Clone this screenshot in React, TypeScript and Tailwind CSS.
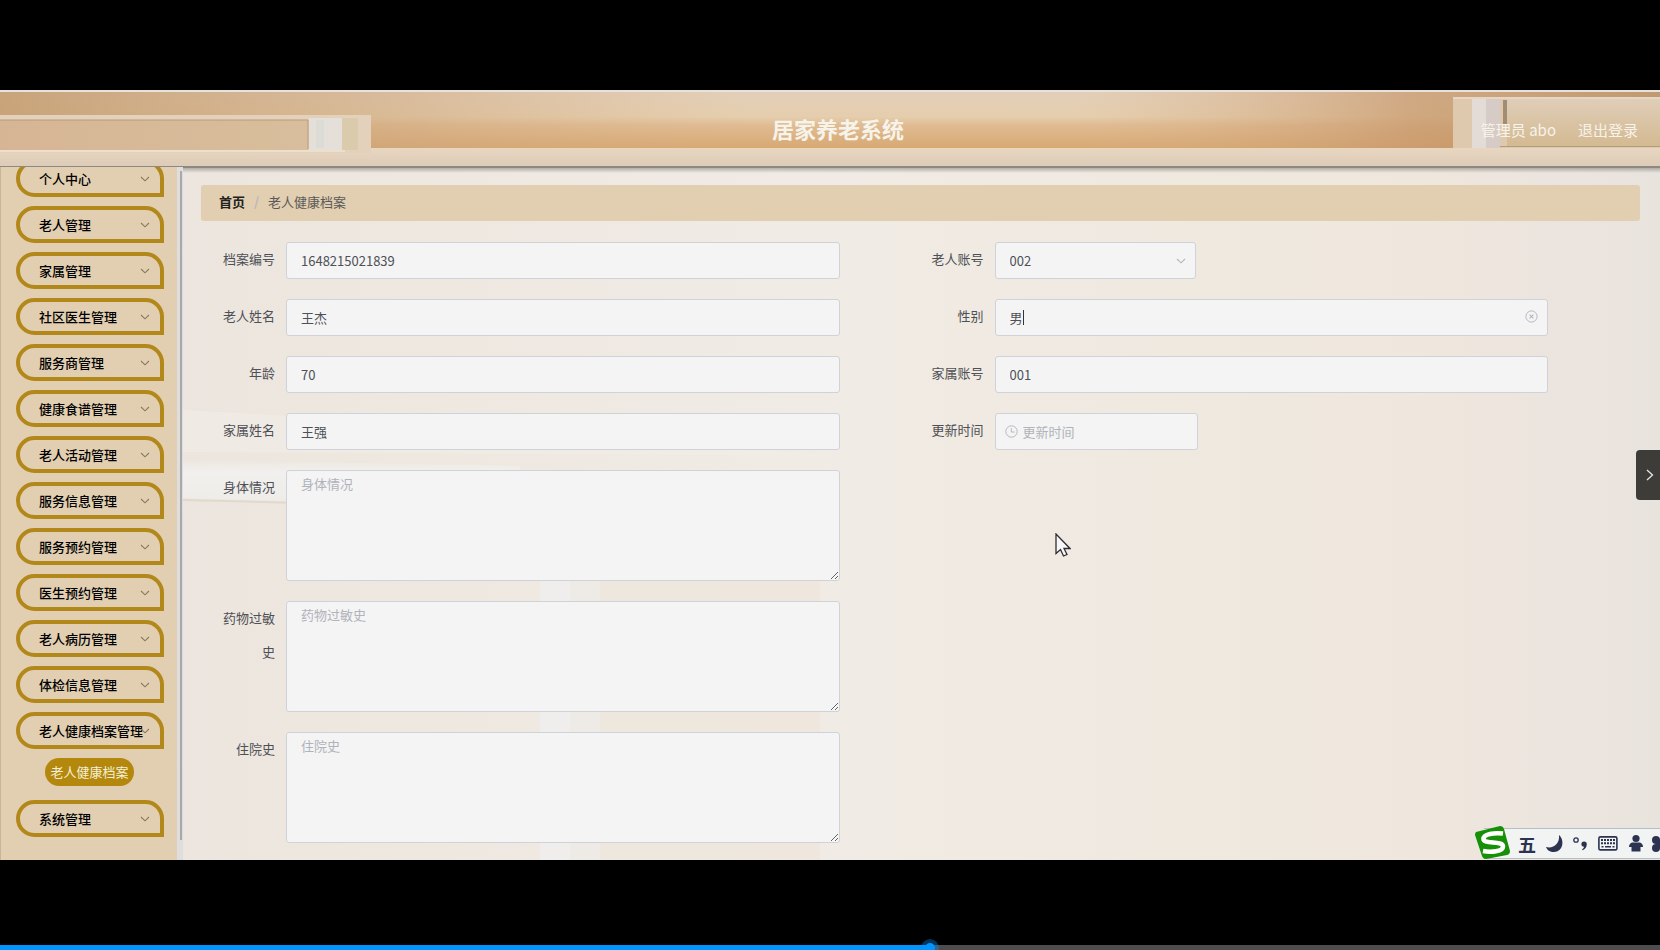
import React, { useState } from 'react';

const MENU = [
  '个人中心',
  '老人管理',
  '家属管理',
  '社区医生管理',
  '服务商管理',
  '健康食谱管理',
  '老人活动管理',
  '服务信息管理',
  '服务预约管理',
  '医生预约管理',
  '老人病历管理',
  '体检信息管理',
  '老人健康档案管理',
];

const FIELD =
  'w-full h-[37px] px-3.5 rounded-[3px] border border-[#cfd2d8] bg-[#f4f4f4] text-[#4e5055] placeholder:text-[#b0b3ba] outline-none';

/**
 * Interior backdrop: shelf in the header, pale wall behind the form
 */
const Backdrop: React.FC = () => (
  <svg
    className="absolute inset-0 w-full h-full"
    viewBox="0 0 1660 770"
    preserveAspectRatio="none"
    aria-hidden="true"
  >
    <defs>
      <linearGradient id="wall" x1="0" x2="1" y1="0" y2="0">
        <stop offset="0" stopColor="#ebe4de" />
        <stop offset="0.2" stopColor="#ede7e0" />
        <stop offset="0.5" stopColor="#f0ebe4" />
        <stop offset="0.86" stopColor="#efe7dd" />
        <stop offset="0.95" stopColor="#ebe4df" />
        <stop offset="1" stopColor="#e9e3dd" />
      </linearGradient>
      <linearGradient id="wood" x1="0" x2="0" y1="0" y2="1">
        <stop offset="0" stopColor="#e2cfba" />
        <stop offset="0.45" stopColor="#e5ceae" />
        <stop offset="0.6" stopColor="#e0bb92" />
        <stop offset="1" stopColor="#d7a871" />
      </linearGradient>
      <linearGradient id="woodSide" x1="0" x2="1" y1="0" y2="0">
        <stop offset="0" stopColor="#bf9566" stopOpacity="0.75" />
        <stop offset="0.25" stopColor="#cda67d" stopOpacity="0.45" />
        <stop offset="0.45" stopColor="#d8b088" stopOpacity="0" />
        <stop offset="0.65" stopColor="#d8b088" stopOpacity="0" />
        <stop offset="0.85" stopColor="#c7986c" stopOpacity="0.7" />
        <stop offset="1" stopColor="#b98c5e" stopOpacity="0.8" />
      </linearGradient>
      <linearGradient id="ledge" x1="0" x2="0" y1="0" y2="1">
        <stop offset="0" stopColor="#e8d6c1" />
        <stop offset="1" stopColor="#dccbb6" />
      </linearGradient>
      <linearGradient id="shelf" x1="0" x2="1" y1="0" y2="0">
        <stop offset="0" stopColor="#d6b594" />
        <stop offset="1" stopColor="#d8be9c" />
      </linearGradient>
      <linearGradient id="cabinet" x1="0" x2="0" y1="0" y2="1">
        <stop offset="0" stopColor="#dfceb8" />
        <stop offset="1" stopColor="#d4b991" />
      </linearGradient>
      <linearGradient id="gleam" x1="0" x2="0" y1="0" y2="1">
        <stop offset="0" stopColor="#f3f2f0" stopOpacity="0" />
        <stop offset="0.3" stopColor="#f1f0ee" />
        <stop offset="1" stopColor="#efece8" />
      </linearGradient>
      <linearGradient id="fadeDown" x1="0" x2="0" y1="0" y2="1">
        <stop offset="0" stopColor="#77736c" stopOpacity="0.5" />
        <stop offset="1" stopColor="#77736c" stopOpacity="0" />
      </linearGradient>
    </defs>

    <rect width="1660" height="770" fill="url(#wall)" />
    <path d="M183 320 L540 340 L840 366 L183 362z" fill="#f1ece7" opacity="0.6" />
    <path d="M183 370 L520 376 L520 386 L286 411 L183 408z" fill="url(#gleam)" />
    <path d="M183 409 L300 412 V414 L183 411z" fill="#e0d9cc" />
    <rect x="540" y="480" width="30" height="290" fill="#efeeed" />
    <rect x="570" y="480" width="30" height="290" fill="#eeebe7" />
    <rect x="600" y="480" width="220" height="290" fill="#eee5dc" opacity="0.7" />

    <rect width="1660" height="59" fill="url(#wood)" />
    <rect width="1660" height="59" fill="url(#woodSide)" />
    <rect width="1660" height="2" fill="#e8e2dd" />
    <rect y="58" width="1660" height="19" fill="url(#ledge)" />

    <rect y="25" width="371" height="38" fill="#e3d1bb" />
    <rect y="30" width="308" height="30" fill="url(#shelf)" />
    <path d="M0 30 H308 V59" fill="none" stroke="#b89a7c" strokeWidth="1" />
    <rect x="309" y="28" width="33" height="32" fill="#e5dfd9" />
    <rect x="316" y="30" width="8" height="28" fill="#dcdcd6" />
    <rect x="342" y="28" width="16" height="32" fill="#d9cbab" />
    <rect y="60" width="345" height="2" fill="#ecdfce" />

    <rect x="1453" y="8" width="207" height="50" fill="#dfc9ae" />
    <rect x="1472" y="9" width="14" height="49" fill="#e3dcd6" />
    <rect x="1486" y="9" width="14" height="49" fill="#d7cbc7" />
    <rect x="1507" y="9" width="153" height="48" fill="url(#cabinet)" />
    <rect x="1503" y="10" width="4" height="24" fill="#a08d73" />
    <rect x="1500" y="56" width="160" height="1" fill="#b39c7c" />
    <rect x="1453" y="7" width="207" height="2" fill="#e6d6c3" />

    <rect y="76" width="1660" height="2" fill="#8d8880" />
    <rect y="78" width="1660" height="5" fill="url(#fadeDown)" />
  </svg>
);

const Chevron: React.FC<{ className?: string }> = ({ className = '' }) => (
  <svg
    className={`w-2.5 h-2.5 shrink-0 ${className}`}
    viewBox="0 0 10 10"
    fill="none"
    stroke="currentColor"
    strokeWidth="1.1"
    aria-hidden="true"
  >
    <path d="M1 3 L5 6.8 L9 3" />
  </svg>
);

const MenuItem: React.FC<{ label: string }> = ({ label }) => (
  <li>
    <button
      type="button"
      className="flex items-center w-full h-[37px] pl-[19px] pr-2.5 rounded-[19px] rounded-br-none border-4 border-[#b3881a] text-left text-black font-medium"
    >
      <span className="flex-1 min-w-0 whitespace-nowrap">{label}</span>
      <Chevron className="text-[#8b7a60]" />
    </button>
  </li>
);

const Sidebar: React.FC = () => (
  <nav className="flex flex-col justify-end w-[177px] shrink-0 overflow-hidden pl-[15px] pr-[13px] pb-[23px] bg-[#e2ceb0] border-l border-[#c9b699]">
    <ul className="flex flex-col gap-[9px]">
      {MENU.map((label) => (
        <MenuItem key={label} label={label} />
      ))}
      <li className="pl-[29px] pb-[5px]">
        <a
          href="#record"
          className="flex items-center justify-center w-[89px] h-7 rounded-full bg-[#b3880c] text-[#f3efd6] whitespace-nowrap"
        >
          老人健康档案
        </a>
      </li>
      <MenuItem label="系统管理" />
    </ul>
  </nav>
);

/**
 * One label + control pair of the form grid
 */
const FormRow: React.FC<{
  id: string;
  label: string;
  className?: string;
  children: React.ReactNode;
}> = ({ id, label, className = '', children }) => (
  <div className={`flex pr-20 ${className}`}>
    <label
      htmlFor={id}
      className="w-[75px] shrink-0 pr-[11px] text-right leading-[34px] text-[#4e5055]"
    >
      {label}
    </label>
    <div className="relative flex-1">{children}</div>
  </div>
);

const AreaRow: React.FC<{ id: string; label: string }> = ({ id, label }) => (
  <FormRow id={id} label={label} className="col-start-1">
    <textarea
      id={id}
      placeholder={label}
      className="block w-full h-[111px] px-3.5 py-[3px] leading-5 resize rounded-[3px] border border-[#cfd2d8] bg-[#f4f4f4] placeholder:text-[#b0b3ba] outline-none"
    />
  </FormRow>
);

const RecordForm: React.FC = () => (
  <form className="grid grid-cols-2 gap-y-5 pl-2.5 pr-3 mt-[21px]">
    <FormRow id="code" label="档案编号">
      <input id="code" className={FIELD} defaultValue="1648215021839" />
    </FormRow>
    <FormRow id="account" label="老人账号">
      <div className="relative w-[201px]">
        <select id="account" className={`${FIELD} appearance-none`} defaultValue="002">
          <option>002</option>
        </select>
        <Chevron className="absolute right-2.5 top-3.5 text-[#b3b6bd]" />
      </div>
    </FormRow>
    <FormRow id="name" label="老人姓名">
      <input id="name" className={FIELD} defaultValue="王杰" />
    </FormRow>
    <FormRow id="gender" label="性别">
      <input id="gender" className={FIELD} defaultValue="男" />
      <span className="absolute left-7 top-[11px] w-px h-[15px] bg-[#333]" />
      <button type="button" aria-label="清空" className="absolute right-2.5 top-[11px] text-[#b5b8c0]">
        <svg className="w-[13px] h-[13px]" viewBox="0 0 13 13" fill="none" stroke="currentColor">
          <circle cx="6.5" cy="6.5" r="5.6" />
          <path d="M4.6 4.6 L8.4 8.4 M8.4 4.6 L4.6 8.4" strokeWidth="1.2" />
        </svg>
      </button>
    </FormRow>
    <FormRow id="age" label="年龄">
      <input id="age" className={FIELD} defaultValue="70" />
    </FormRow>
    <FormRow id="family" label="家属账号">
      <input id="family" className={FIELD} defaultValue="001" />
    </FormRow>
    <FormRow id="familyName" label="家属姓名">
      <input id="familyName" className={FIELD} defaultValue="王强" />
    </FormRow>
    <FormRow id="updated" label="更新时间">
      <div className="relative w-[203px]">
        <input id="updated" className={`${FIELD} pl-[27px]`} placeholder="更新时间" />
        <svg
          className="absolute left-2.5 top-3 w-[13px] h-[13px] text-[#b5b8c0]"
          viewBox="0 0 13 13"
          fill="none"
          stroke="currentColor"
          aria-hidden="true"
        >
          <circle cx="6.5" cy="6.5" r="5.7" />
          <path d="M6.3 3.2 V7 H9.6" />
        </svg>
      </div>
    </FormRow>
    <AreaRow id="body" label="身体情况" />
    <AreaRow id="allergy" label="药物过敏史" />
    <AreaRow id="hospital" label="住院史" />
  </form>
);

/**
 * Input method toolbar docked in the corner
 */
const ImeBar: React.FC = () => (
  <div className="absolute right-0 bottom-px flex items-center justify-end w-[176px] h-[31px] border-y border-[#b4c0c4] bg-[#f2f4f3] text-[#2b3350]">
    <svg className="absolute -left-[9px] -top-1 w-9 h-9" viewBox="0 0 36 36" aria-hidden="true">
      <path d="M1 7 L25 1 Q28 1 29 4 L35 26 Q35 29 32 30 L11 34 Q8 34 7 31 L0 10 Q0 8 1 7z" fill="#169006" />
      <path
        d="M28 8.5 C19 7.5 8.5 9 8.5 14 C8.5 19.5 28 15.5 28 21.5 C28 26.5 16 27.5 8 26"
        fill="none"
        stroke="#fff"
        strokeWidth="4.6"
      />
    </svg>
    <span className="w-[27px] shrink-0 text-[18px] leading-[28px] font-bold">五</span>
    <svg className="w-[115px] h-5 shrink-0" viewBox="0 0 115 20" fill="currentColor" aria-hidden="true">
      <path d="M14 1 C20 6 18 18 9 18 C5 18 2 16 1 13 C8 15 15 10 14 1z" />
      <circle cx="31" cy="6" r="2.2" fill="none" stroke="currentColor" strokeWidth="1.3" />
      <path d="M39 7.5 a2.8 2.8 0 0 1 2.8 2.8 c0 3-1.8 5-4 6 l-.8-1 c1.2-.8 2-1.6 2-2.6 a2.6 2.6 0 0 1 0-5.2z" />
      <rect x="53.9" y="2.9" width="18" height="13" rx="1.5" fill="none" stroke="currentColor" strokeWidth="1.6" />
      <path
        d="M56 6 H70 M56 9.3 H70"
        stroke="currentColor"
        strokeWidth="2"
        strokeDasharray="2 1"
      />
      <path d="M56.5 12.8 H58.5 M60 12.8 H66 M67.5 12.8 H69.5" stroke="currentColor" strokeWidth="1.6" />
      <circle cx="91" cy="4.5" r="3.6" />
      <path d="M87 8.5 H95 Q98 9.5 98 13 H95.5 V17.5 H86.5 V13 H84 Q84 9.5 87 8.5z" />
      <circle cx="111" cy="6" r="4" />
      <circle cx="111" cy="14" r="4" />
      <rect x="111" y="6" width="6" height="8" />
    </svg>
  </div>
);

const VideoProgress: React.FC = () => {
  const [value, setValue] = useState(56);
  return (
    <div className="relative h-[5px] bg-[#4d4d4d]">
      <div className="h-full bg-[#0094ff]" style={{ width: `${value}%` }} />
      <svg
        className="absolute bottom-[-7px] w-[18px] h-[18px] -translate-x-1/2"
        style={{ left: `${value}%` }}
        viewBox="0 0 18 18"
        aria-hidden="true"
      >
        <circle cx="9" cy="9" r="9" fill="#0094ff" opacity="0.35" />
        <circle cx="9" cy="9" r="5" fill="#0094ff" />
      </svg>
      <input
        type="range"
        aria-label="播放进度"
        className="absolute inset-0 w-full h-full opacity-0"
        value={value}
        onChange={(e) => setValue(Number(e.target.value))}
      />
    </div>
  );
};

export default function App() {
  return (
    <div className="relative flex flex-col h-screen overflow-hidden bg-black pt-[90px] font-['Noto_Sans_CJK_SC',sans-serif] text-[13px]">
      <div className="relative flex flex-col flex-1 min-h-0 overflow-hidden">
        <Backdrop />

        <header className="relative grid grid-cols-[1fr_auto_1fr] items-center h-[77px] shrink-0 pl-[38px] pr-[22px] text-[#f6f3ea]">
          <h1 className="col-start-2 text-[22px] font-bold">居家养老系统</h1>
          <div className="flex justify-end gap-[22px] pt-[3px] text-[15px]">
            <span>管理员 abo</span>
            <a href="#logout">退出登录</a>
          </div>
        </header>

        <div className="relative flex flex-1 min-h-0">
          <Sidebar />
          {/* sidebar scroll thumb */}
          <div className="w-1.5 shrink-0 pt-1 pb-5 pl-[3px] pr-px bg-[#dedede]">
            <div className="h-full bg-[#a9a9ab]" />
          </div>
          <main className="flex-1 min-w-0 overflow-hidden pt-[18px] pl-[18px] pr-5">
            <div className="flex items-center h-9 px-[18px] pb-0.5 rounded-[3px] bg-[#e2ceb0] text-[#5b5a58]">
              <a href="#home" className="font-bold text-[#222]">
                首页
              </a>
              <span className="w-[23px] text-center text-[#b9b9bb] font-bold">/</span>
              <span>老人健康档案</span>
            </div>
            <RecordForm />
          </main>
        </div>
        <ImeBar />
      </div>

      <button
        type="button"
        aria-label="展开"
        className="absolute right-0 top-[450px] flex items-center justify-center w-6 h-[50px] pl-1 rounded-l-sm bg-[#3d3c39] text-[#e6e6e6]"
      >
        <svg className="w-2.5 h-3" viewBox="0 0 10 12" fill="none" stroke="currentColor" strokeWidth="1.3">
          <path d="M2 1 L7.5 6 L2 11" />
        </svg>
      </button>

      {/* mouse pointer */}
      <svg className="absolute left-[1055px] top-[533px] w-4 h-6" viewBox="0 0 16 24" aria-hidden="true">
        <path
          d="M1 1 V20.5 L5.5 16.5 L8.5 23 L12 21.5 L9 15.5 H15z"
          fill="#f7f7f7"
          stroke="#2d2d33"
          strokeWidth="1.3"
        />
      </svg>

      <footer className="flex flex-col justify-end h-[90px] shrink-0">
        <VideoProgress />
      </footer>
    </div>
  );
}
